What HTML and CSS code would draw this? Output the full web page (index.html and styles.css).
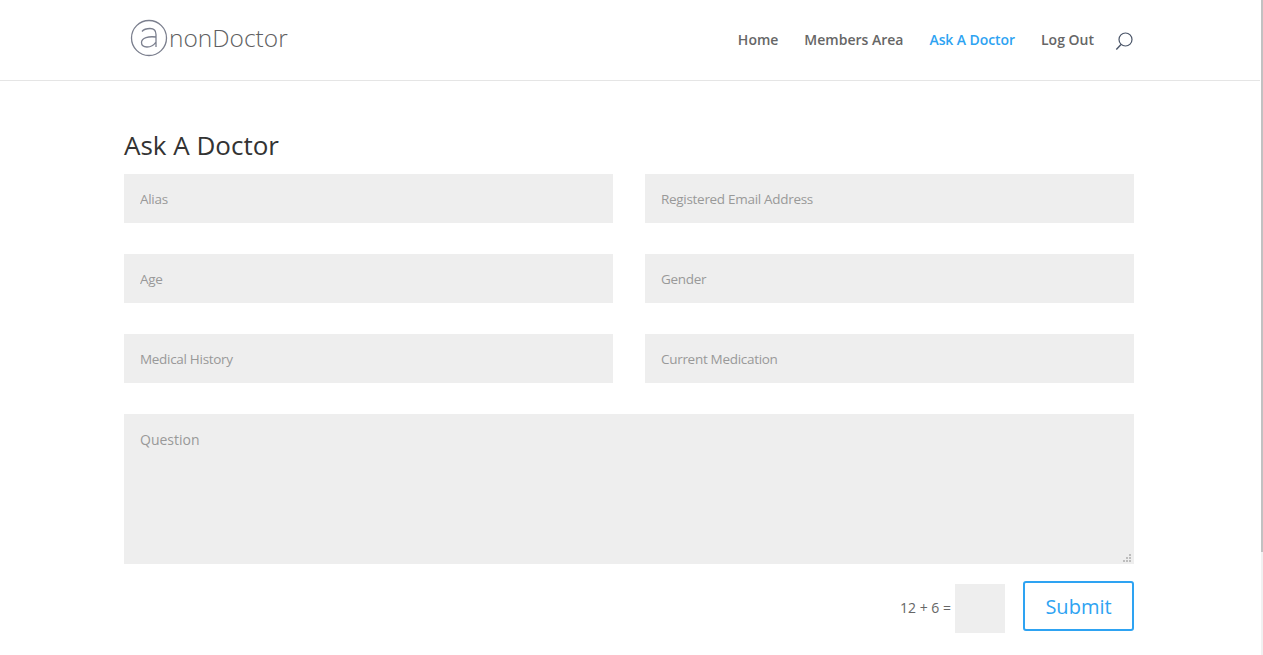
FILE: index.html
```html
<!DOCTYPE html>
<html lang="en">
<head>
<meta charset="utf-8">
<title>Ask A Doctor</title>
<link rel="stylesheet" href="styles.css">
</head>
<body>
<div class="scrollbar" aria-hidden="true"><div class="scrollbar-thumb"></div></div>
<header class="site-header">
  <div class="header-inner">
    <a class="logo" href="#">
      <svg class="logo-mark" width="38" height="38" viewBox="0 0 38 38" aria-hidden="true">
        <circle cx="19" cy="19" r="17.5" fill="none" stroke="#7b7f8e" stroke-width="1.3"/>
        <path d="M12 12.5C14 10 17 9.5 20 9.5c4 0 6 2.2 6 6V28M26 18c-4 -.5-7-.4-10 .6-3 1-4.500 2.900-4.500 5 0 2.800 2.500 4.400 5.500 4.400 4 0 7-2 9-5" fill="none" stroke="#7b7f8e" stroke-width="1.300"/>
      </svg>
      <span class="logo-text">nonDoctor</span>
    </a>
    <nav class="main-nav">
      <a href="#">Home</a>
      <a href="#">Members Area</a>
      <a href="#" class="current">Ask A Doctor</a>
      <a href="#">Log Out</a>
      <svg class="search-icon" width="18" height="18" viewBox="0 0 18 18" aria-hidden="true">
        <circle cx="10.500" cy="7.500" r="6.500" fill="none" stroke="#4a5568" stroke-width="1.200"/>
        <path d="M6 12.500 1.300 17.500" fill="none" stroke="#4a5568" stroke-width="1.400"/>
      </svg>
    </nav>
  </div>
</header>
<main class="content">
  <h1 class="page-title">Ask A Doctor</h1>
  <form class="ask-form">
    <div class="field-grid">
      <input class="field short" type="text" placeholder="Alias">
      <input class="field short" type="text" placeholder="Registered Email Address">
      <input class="field short" type="text" placeholder="Age">
      <input class="field short" type="text" placeholder="Gender">
      <input class="field short" type="text" placeholder="Medical History">
      <input class="field short" type="text" placeholder="Current Medication">
    </div>
    <div class="question-wrap">
      <textarea class="field question" placeholder="Question"></textarea>
      <svg class="grip" width="9" height="9" viewBox="0 0 9 9" aria-hidden="true">
        <path d="M6 0h2v2H6zM3 3h2v2H3zM6 3h2v2H6zM0 6h2v2H0zM3 6h2v2H3zM6 6h2v2H6z" fill="#bdbdbd"/>
      </svg>
    </div>
    <div class="submit-row">
      <span class="captcha-label">12 + 6 =</span>
      <input class="captcha-input" type="text">
      <button class="submit" type="button">Submit</button>
    </div>
  </form>
</main>
</body>
</html>
```
FILE: styles.css
```css
* { box-sizing: border-box; }
html, body { margin: 0; padding: 0; height: 100%; overflow: hidden; }
body {
  background: #fff;
  font-family: "Open Sans", sans-serif;
  font-size: 14px;
  color: #666;
}
.scrollbar {
  position: fixed;
  top: 0;
  right: 0;
  width: 2px;
  height: 100%;
  background: #f1f1f1;
}
.scrollbar-thumb {
  height: 552px;
  background: #c1c1c1;
}
.site-header {
  height: 81px;
  margin-right: 3px;
  border-bottom: 1px solid #e5e5e5;
}
.header-inner {
  width: 1010px;
  margin-left: 124px;
  height: 80px;
  display: flex;
  align-items: center;
  justify-content: space-between;
}
.logo {
  display: flex;
  align-items: center;
  margin-left: 6px;
  margin-bottom: 4px;
  text-decoration: none;
}
.logo-text {
  font-size: 24.500px;
  font-weight: 300;
  color: #5f5f62;
  margin-left: 1px;
  position: relative;
  top: -1px;
}
.main-nav {
  display: flex;
  align-items: center;
  gap: 26px;
  font-size: 14px;
  font-weight: 600;
}
.main-nav a { color: #666; text-decoration: none; position: relative; top: -1px; }
.main-nav a.current { color: #2ea3f2; letter-spacing: -0.08px; }
.search-icon { margin-left: -5px; margin-right: 1px; margin-top: 2px; }
.content {
  width: 1010px;
  margin-left: 124px;
}
.page-title {
  margin: 46px 0 11px;
  font-size: 26px;
  font-weight: 400;
  line-height: 36px;
  color: #333;
}
.field-grid {
  display: grid;
  grid-template-columns: 489px 489px;
  column-gap: 32px;
  row-gap: 31px;
}
.field {
  display: block;
  width: 100%;
  height: 49px;
  padding: 16px;
  border: 0;
  border-radius: 0;
  background: #eee;
  font-family: "Open Sans", sans-serif;
  font-size: 14px;
  color: #999;
  outline: none;
}
.field.short { font-size: 13.500px; letter-spacing: -0.3px; }
.field::placeholder { color: #999; opacity: 1; }
.question-wrap {
  position: relative;
  margin-top: 31px;
}
.question {
  height: 150px;
  resize: none;
}
.grip {
  position: absolute;
  right: 2px;
  bottom: 1px;
}
.submit-row {
  display: flex;
  align-items: center;
  justify-content: flex-end;
  margin-top: 17px;
}
.captcha-label { margin-right: 4px; }
.captcha-input {
  width: 50px;
  height: 49px;
  margin-top: 3px;
  border: 0;
  background: #eee;
}
.submit {
  align-self: flex-start;
  width: 111px;
  height: 50px;
  margin-left: 18px;
  padding: 0;
  border: 2px solid #2ea3f2;
  border-radius: 3px;
  background: #fff;
  color: #2ea3f2;
  font-family: "Open Sans", sans-serif;
  font-size: 20px;
}
```
